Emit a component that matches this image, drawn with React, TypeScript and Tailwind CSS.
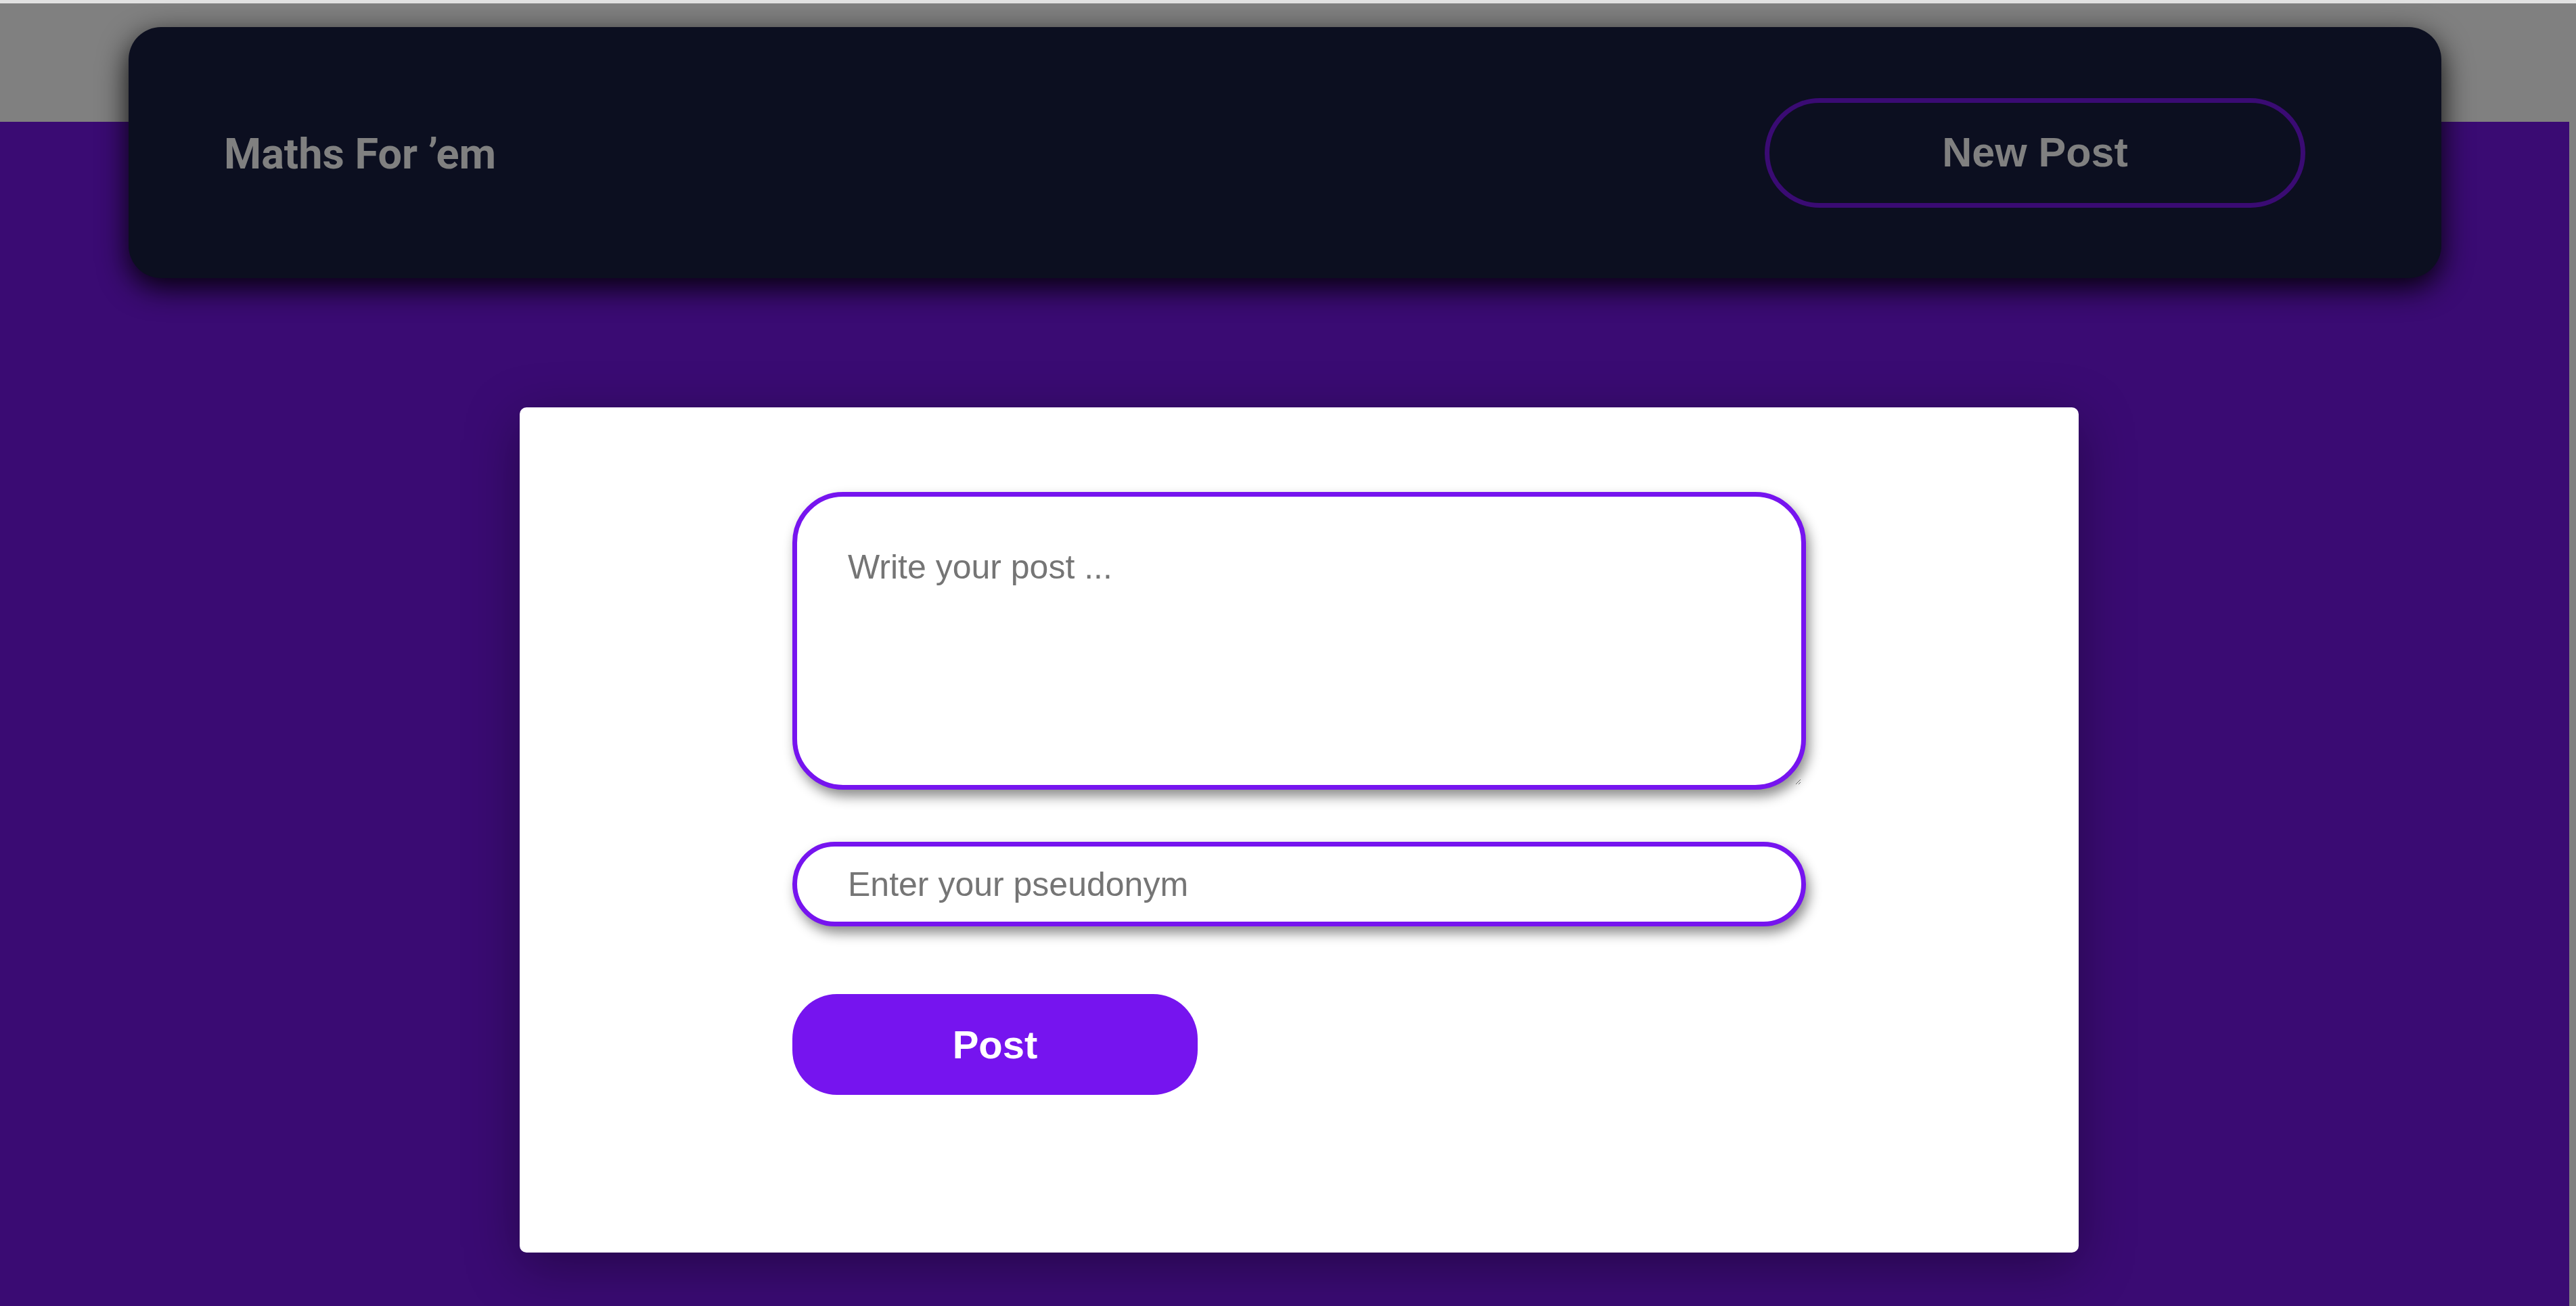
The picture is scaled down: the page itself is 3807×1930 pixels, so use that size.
import React from "react";

export default function App() {
  return (
    <div className="relative w-[3807px] h-[1930px] overflow-hidden bg-[#808080]">
      <div className="h-[5px] bg-[#e1e1e1]" />
      <div className="h-[175px]" />
      <main className="w-[3797px] h-[1750px] bg-[#3a0b73] pt-[422px] pl-[768px]">
        <div className="w-[2304px] h-[1249px] bg-white rounded-[10px] shadow-[0_20px_80px_rgba(0,0,0,0.35)] flex flex-col items-center pt-[125px]">
          <textarea
            placeholder="Write your post ..."
            className="block w-[1498px] h-[440px] border-[7.5px] border-[#7614ef] rounded-[75px] px-[75px] pb-[75px] pt-[67px] text-[50px] leading-normal text-[#222] placeholder:text-[#757575] bg-white outline-none shadow-[5px_10px_18px_rgba(0,0,0,0.45)] font-['Liberation_Sans',Arial,sans-serif]"
          />
          <input
            type="text"
            placeholder="Enter your pseudonym"
            className="block mt-[77px] w-[1498px] h-[125px] border-[7.5px] border-[#7614ef] rounded-full pl-[75px] text-[50px] text-[#222] placeholder:text-[#757575] bg-white outline-none shadow-[5px_10px_18px_rgba(0,0,0,0.45)] font-['Liberation_Sans',Arial,sans-serif]"
          />
          <div className="w-[1498px] mt-[100px]">
            <button className="w-[599px] h-[149px] rounded-[66px] bg-[#7614ef] text-white font-bold text-[58px] font-['Liberation_Sans',Arial,sans-serif]">
              Post
            </button>
          </div>
        </div>
      </main>
      <header className="fixed top-[40px] left-[190px] w-[3418px] h-[371px] bg-[#0c0f20] rounded-[48px] shadow-[0_14px_44px_rgba(0,0,0,0.92)] flex items-center justify-between pl-[141px] pr-[201px]">
        <h1 className="mt-[4px] text-[63px] font-bold text-[#808080] font-['Roboto',sans-serif] leading-none">
          Maths For ’em
        </h1>
        <button className="w-[799px] h-[162px] rounded-full border-[7px] border-[#3a0b73] text-[#808080] font-bold text-[61px] font-['Liberation_Sans',Arial,sans-serif]">
          New Post
        </button>
      </header>
    </div>
  );
}
